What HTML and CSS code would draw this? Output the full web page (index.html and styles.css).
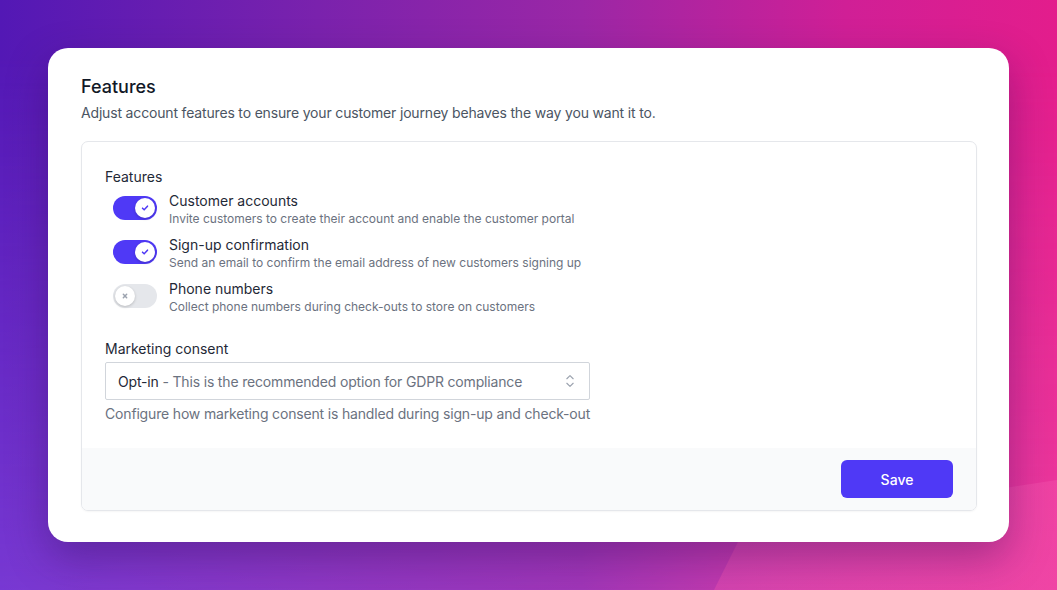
FILE: index.html
```html
<!DOCTYPE html>
<html lang="en">
<head>
  <meta charset="UTF-8" />
  <meta name="viewport" content="width=device-width, initial-scale=1.0" />
  <title>Features | Account settings</title>
  <link rel="stylesheet" href="styles.css">
</head>
<body>
  <div class="card">
    <h1>Features</h1>
    <p class="lead">Adjust account features to ensure your customer journey behaves the way you want it to.</p>

    <form class="panel">
      <div class="panel-body">
        <div class="label">Features</div>

        <div class="toggles">
          <div class="toggle-row">
            <span class="switch on">
              <span class="knob">
                <svg viewBox="0 0 12 12" width="10" height="10"><path d="M3 6.2l2 2 4-4.4" fill="none" stroke="currentColor" stroke-width="1.8" stroke-linecap="round" stroke-linejoin="round"/></svg>
              </span>
            </span>
            <div>
              <div class="toggle-title">Customer accounts</div>
              <div class="toggle-desc">Invite customers to create their account and enable the customer portal</div>
            </div>
          </div>

          <div class="toggle-row">
            <span class="switch on">
              <span class="knob">
                <svg viewBox="0 0 12 12" width="10" height="10"><path d="M3 6.2l2 2 4-4.4" fill="none" stroke="currentColor" stroke-width="1.8" stroke-linecap="round" stroke-linejoin="round"/></svg>
              </span>
            </span>
            <div>
              <div class="toggle-title">Sign-up confirmation</div>
              <div class="toggle-desc">Send an email to confirm the email address of new customers signing up</div>
            </div>
          </div>

          <div class="toggle-row">
            <span class="switch">
              <span class="knob">
                <svg viewBox="0 0 12 12" width="10" height="10"><path d="M4 4l4 4M8 4l-4 4" fill="none" stroke="currentColor" stroke-width="1.8" stroke-linecap="round"/></svg>
              </span>
            </span>
            <div>
              <div class="toggle-title">Phone numbers</div>
              <div class="toggle-desc">Collect phone numbers during check-outs to store on customers</div>
            </div>
          </div>
        </div>

        <div class="label consent-label">Marketing consent</div>
        <div class="select">
          <span><span class="opt">Opt-in</span> - This is the recommended option for GDPR compliance</span>
          <svg viewBox="0 0 20 20" width="18" height="18"><path d="M6.5 7.5l3.5-3.5 3.5 3.5M6.5 12.5l3.5 3.5 3.5-3.5" fill="none" stroke="currentColor" stroke-width="1.3" stroke-linecap="round" stroke-linejoin="round"/></svg>
        </div>
        <p class="help">Configure how marketing consent is handled during sign-up and check-out</p>
      </div>

      <div class="panel-footer">
        <button type="button" class="save">Save</button>
      </div>
    </form>
  </div>
</body>
</html>
```

FILE: styles.css
```css
html, body {
  height: 100%;
}
body {
  font-family: Inter, 'Noto Sans', sans-serif;
  margin: 0;
  padding: 48px;
  box-sizing: border-box;
  position: relative;
  overflow: hidden;
  background: linear-gradient(to right, #8b4ae3 0%, #a43fc2 55%, #d64ab4 75%, #f24ca9 100%);
}
/* top half of the backdrop, fading into the lighter bottom colours */
body::before {
  content: "";
  position: absolute;
  inset: 0;
  background: linear-gradient(to right, #5318b5 0%, #7a22ad 30%, #9b27a6 55%, #d01f96 80%, #e31d8c 100%);
  -webkit-mask-image: linear-gradient(to bottom, #000 10%, rgba(0,0,0,0.35) 100%);
  mask-image: linear-gradient(to bottom, #000 10%, rgba(0,0,0,0.35) 100%);
}
/* soft lighter wave behind the lower right */
body::after {
  content: "";
  position: absolute;
  inset: 0;
  background: linear-gradient(to right, #c64cc0, #f24ca9);
  clip-path: polygon(745px 528px, 1057px 480px, 1057px 590px, 714px 590px);
  opacity: 0.55;
}

.card {
  position: relative;
  z-index: 1;
  background: #fff;
  border-radius: 20px;
  padding: 25px 32px 31px 33px;
  box-shadow: 0 16px 40px rgba(40, 10, 80, 0.35);
}
h1 {
  margin: 0;
  font-size: 18px;
  line-height: 28px;
  font-weight: 500;
  color: #111827;
}
.lead {
  margin: 2px 0 0;
  font-size: 14px;
  line-height: 20px;
  letter-spacing: -0.17px;
  color: #4b5563;
}

.panel {
  margin: 18px 0 0;
  border: 1px solid #e5e7eb;
  border-radius: 7px;
  overflow: hidden;
  box-shadow: 0 1px 2px rgba(0, 0, 0, 0.04);
}
.panel-body {
  padding: 25px 23px 24px;
}
.label {
  font-size: 14px;
  line-height: 20px;
  color: #1f2937;
}
.toggles {
  display: flex;
  flex-direction: column;
  gap: 8px;
  margin-top: 4px;
}
.toggle-row {
  display: flex;
  align-items: flex-start;
  gap: 12px;
  padding-left: 8px;
}
.switch {
  flex: none;
  width: 44px;
  height: 24px;
  margin-top: 5px;
  border-radius: 12px;
  background: #e5e7eb;
  box-sizing: border-box;
  padding: 2px;
  display: flex;
  justify-content: flex-start;
}
.switch.on {
  background: #4f39f6;
  justify-content: flex-end;
}
.knob {
  width: 20px;
  height: 20px;
  border-radius: 50%;
  background: #fff;
  box-shadow: 0 1px 3px rgba(0, 0, 0, 0.2);
  display: flex;
  align-items: center;
  justify-content: center;
  color: #9ca3af;
}
.switch.on .knob {
  color: #4f39f6;
}
.toggle-title {
  font-size: 14px;
  line-height: 20px;
  color: #1f2937;
}
.toggle-desc {
  font-size: 12px;
  line-height: 16px;
  color: #6b7280;
}

.consent-label {
  margin-top: 24px;
}
.select {
  margin-top: 3px;
  width: 485px;
  height: 38px;
  box-sizing: border-box;
  border: 1px solid #d1d5db;
  border-radius: 2px;
  padding: 0 10px 0 12px;
  display: flex;
  align-items: center;
  justify-content: space-between;
  font-size: 14px;
  letter-spacing: -0.17px;
  color: #6b7280;
}
.select .opt {
  color: #1f2937;
}
.select svg {
  color: #9ca3af;
}
.help {
  margin: 4px 0 0;
  font-size: 14px;
  line-height: 20px;
  letter-spacing: -0.17px;
  color: #6b7280;
}

.panel-footer {
  background: #f9fafb;
  padding: 12px 23px 12px;
  display: flex;
  justify-content: flex-end;
}
.save {
  width: 112px;
  height: 38px;
  border: none;
  border-radius: 6px;
  background: #4f39f6;
  color: #fff;
  font-family: inherit;
  font-size: 14px;
  font-weight: 500;
  cursor: pointer;
}
```
